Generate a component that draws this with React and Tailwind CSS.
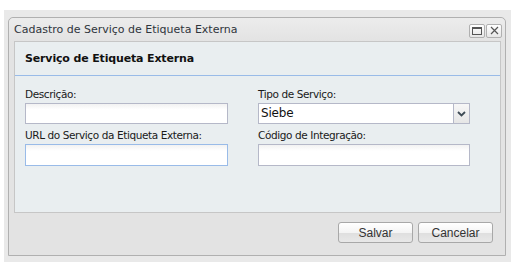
export default function App() {
  const tahoma = { fontFamily: '"DejaVu Sans", Tahoma, sans-serif' };

  return (
    <div className="w-[522px] h-[272px] bg-white pt-[10px] pl-[4px]" style={tahoma}>
      {/* shadow frame */}
      <div className="w-[507px] h-[252px] bg-[#e9e9e9] pt-[7px] pl-[4px]">
        {/* window */}
        <div className="w-[498px] h-[239px] border border-[#b0b0b0] rounded-t-[5px] bg-[#e3e3e3] flex flex-col">
          {/* title bar */}
          <div className="h-[23px] flex items-center justify-between pl-[5px] pr-[3px] bg-gradient-to-b from-[#ececec] to-[#e3e3e3] rounded-t-[5px]">
            <span className="text-[11px] text-[#2f353c] pt-[1px]">
              Cadastro de Serviço de Etiqueta Externa
            </span>
            <div className="flex gap-[1px] mt-[2px]">
              <button className="w-[16px] h-[14px] border border-[#b0b0b0] rounded-[2px] bg-gradient-to-b from-white to-[#e6e6e6] flex items-center justify-center">
                <span className="block w-[10px] h-[8px] border border-[#555] border-t-2" />
              </button>
              <button className="w-[16px] h-[14px] border border-[#b0b0b0] rounded-[2px] bg-gradient-to-b from-white to-[#e6e6e6] flex items-center justify-center">
                <svg width="9" height="9" viewBox="0 0 9 9">
                  <path d="M1 1L8 8M8 1L1 8" stroke="#555" strokeWidth="1.2" />
                </svg>
              </button>
            </div>
          </div>

          {/* panel */}
          <div className="ml-[5px] mr-[4px] h-[172px] border border-[#c6c6c6] bg-[#e9eef0]">
            <div className="h-[34px] border-b border-[#99bbe8] flex items-center pl-[10px]">
              <span className="text-[11px] font-bold text-[#111] tracking-[-0.15px] pt-[1px]">Serviço de Etiqueta Externa</span>
            </div>
            <div className="grid grid-cols-[203px_212px] gap-x-[30px] pl-[10px] pt-[7px]">
              <div>
                <div className="text-[10.5px] text-[#1a1a1a] h-[20px] leading-[22px] tracking-[-0.4px]">Descrição:</div>
                <div className="h-[21px] border border-[#b5b8c8] bg-gradient-to-b from-[#f2f2f2] to-white to-[30%]" />
              </div>
              <div>
                <div className="text-[10.5px] text-[#1a1a1a] h-[20px] leading-[22px] tracking-[-0.4px]">Tipo de Serviço:</div>
                <div className="h-[21px] border border-[#b5b8c8] bg-white flex">
                  <div className="flex-1 text-[12px] text-[#111] leading-[19px] pl-[2px] tracking-[-0.2px]">Siebe</div>
                  <div className="w-[16px] border-l border-[#b5b8c8] bg-gradient-to-b from-[#f7f7f7] to-[#e6e6e6] flex items-center justify-center">
                    <svg width="9" height="6" viewBox="0 0 9 6">
                      <path d="M1 1L4.5 4.5L8 1" stroke="#3e4b55" strokeWidth="1.8" fill="none" />
                    </svg>
                  </div>
                </div>
              </div>
              <div>
                <div className="text-[10.5px] text-[#1a1a1a] h-[20px] leading-[22px] tracking-[-0.4px]">URL do Serviço da Etiqueta Externa:</div>
                <div className="h-[22px] border border-[#99bbe8] bg-gradient-to-b from-[#f2f2f2] to-white to-[30%]" />
              </div>
              <div>
                <div className="text-[10.5px] text-[#1a1a1a] h-[20px] leading-[22px] tracking-[-0.4px]">Código de Integração:</div>
                <div className="h-[22px] border border-[#b5b8c8] bg-gradient-to-b from-[#f2f2f2] to-white to-[30%]" />
              </div>
            </div>
          </div>

          {/* footer */}
          <div className="flex justify-end gap-[5px] pt-[9px] pr-[12px]" style={{ fontFamily: '"Liberation Sans", Arial, sans-serif' }}>
            <button className="w-[75px] h-[21px] border border-[#a8a8a8] rounded-[3px] bg-[linear-gradient(#ffffff,#f4f4f4_50%,#dedede_51%,#e8e8e8)] text-[12px] text-[#333]">
              Salvar
            </button>
            <button className="w-[75px] h-[21px] border border-[#a8a8a8] rounded-[3px] bg-[linear-gradient(#ffffff,#f4f4f4_50%,#dedede_51%,#e8e8e8)] text-[12px] text-[#333]">
              Cancelar
            </button>
          </div>
        </div>
      </div>
    </div>
  );
}
